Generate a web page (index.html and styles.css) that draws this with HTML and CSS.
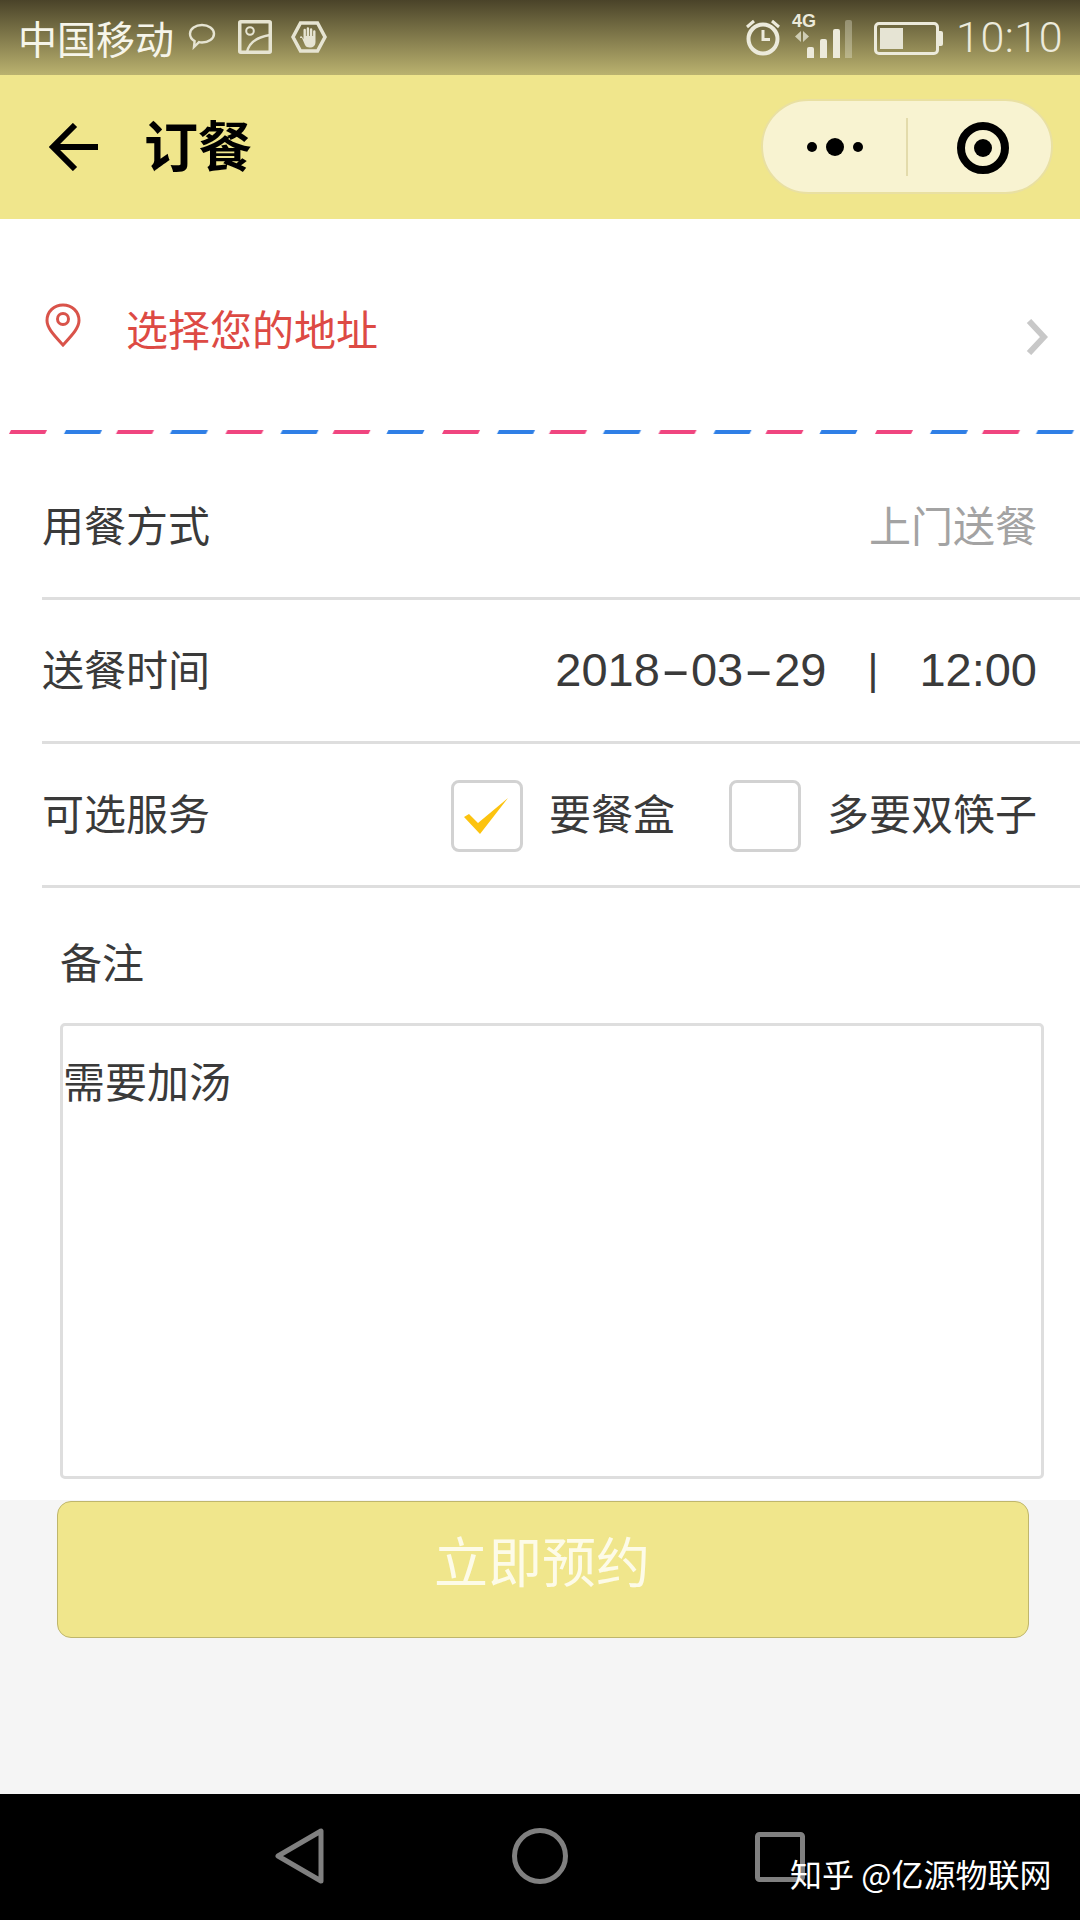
FILE: index.html
```html
<!DOCTYPE html>
<html lang="zh-CN">
<head>
    <meta charset="UTF-8">
    <title>订餐</title>
    <link rel="stylesheet" href="styles.css">
</head>
<body>
    <div class="screen">
        <div class="status-bar">
            <div class="status-left">
                <span class="carrier">中国移动</span>
                <svg class="ic-bubble" width="28" height="28" viewBox="0 0 28 28" fill="none" stroke="#e6e4d2" stroke-width="2.4">
                    <path d="M14 3c6.500 0 12 3.800 12 8.800s-5.500 8.700-12 8.700c-1 0-2 0-3-.3L6 25l.6-5.900C3.800 17.500 2 15 2 11.800 2 6.800 7.500 3 14 3z"/>
                </svg>
                <svg class="ic-photo" width="34" height="34" viewBox="0 0 34 34" fill="none" stroke="#e6e4d2" stroke-width="3.500">
                    <rect x="1.750" y="1.750" width="30.500" height="30.500" rx="1"/>
                    <circle cx="12" cy="11" r="3.800" stroke-width="2"/>
                    <path d="M9 32c2-9 10-15 23-17" stroke-width="2.400"/>
                </svg>
                <svg class="ic-hand" width="36" height="32" viewBox="0 0 36 32">
                    <path d="M9.500 2h17L34 16l-7.500 14h-17L2 16z" fill="none" stroke="#e6e4d2" stroke-width="3.500"/>
                    <path d="M11 17l3 7c1 1.800 2.500 2.500 4.500 2.500 4 0 6-2 6-6V10.500a1.200 1.200 0 0 0-2.400 0V15h-.8V8.500a1.200 1.200 0 0 0-2.400 0V15h-.8V7.500a1.200 1.200 0 0 0-2.400 0V15h-.8V9a1.200 1.200 0 0 0-2.400 0v9l-1.500-2.300c-1-1-2.600-.2-1.800 1.300z" fill="#e6e4d2"/>
                </svg>
            </div>
            <div class="status-right">
                <svg class="ic-alarm" width="36" height="38" viewBox="0 0 36 38" fill="none" stroke="#eceadb">
                    <circle cx="18" cy="21" r="14.500" stroke-width="4"/>
                    <path d="M18 12v9.500h7" stroke-width="3"/>
                    <path d="M2 9l7-6M34 9l-7-6" stroke-width="3"/>
                </svg>
                <div class="signal">
                    <span class="net-label">4G</span>
                    <svg class="net-arrows" width="14" height="12" viewBox="0 0 14 12" fill="#cfcdb4">
                        <path d="M6 0v11L0 5.500zM8 0v11l6-5.500z"/>
                    </svg>
                    <span class="bar bar-1"></span>
                    <span class="bar bar-2"></span>
                    <span class="bar bar-3"></span>
                    <span class="bar bar-4"></span>
                </div>
                <div class="battery"><span class="battery-level"></span></div>
                <span class="clock">10:10</span>
            </div>
        </div>

        <div class="nav-bar">
            <svg class="back-arrow" width="50" height="48" viewBox="0 0 50 48" fill="none" stroke="#000" stroke-width="6">
                <path d="M49 24H5M26 2L4 24l22 22"/>
            </svg>
            <span class="nav-title">订餐</span>
            <div class="capsule">
                <div class="capsule-more">
                    <span class="dot"></span>
                    <span class="dot dot-big"></span>
                    <span class="dot"></span>
                </div>
                <span class="capsule-split"></span>
                <div class="capsule-close">
                    <span class="close-ring"><span class="close-core"></span></span>
                </div>
            </div>
        </div>

        <div class="form-page">
            <div class="address">
                <svg class="pin" width="36" height="44" viewBox="0 0 36 44" fill="none" stroke="#d9534a" stroke-width="3">
                    <path d="M18 42C9 32 2 25 2 17.500 2 8.500 9 2 18 2s16 6.500 16 15.500C34 25 27 32 18 42z"/>
                    <circle cx="18" cy="16" r="5.500"/>
                </svg>
                <span class="address-text">选择您的地址</span>
                <svg class="chevron" width="22" height="36" viewBox="0 0 22 36" fill="none" stroke="#c8c8c8" stroke-width="6">
                    <path d="M3 2l15 16L3 34"/>
                </svg>
            </div>

            <svg class="airmail" width="1080" height="4" viewBox="0 0 1080 4">
                <defs>
                    <pattern id="airmail-dash" width="216.500" height="4" patternUnits="userSpaceOnUse">
                        <path d="M9 4l2-4h36l-2 4z" fill="#f0457f"/>
                        <path d="M64 4l2-4h36l-2 4z" fill="#2f7fe6"/>
                        <path d="M116 4l2-4h36l-2 4z" fill="#f0457f"/>
                        <path d="M170 4l2-4h36l-2 4z" fill="#2f7fe6"/>
                    </pattern>
                </defs>
                <rect width="1080" height="4" fill="url(#airmail-dash)"/>
            </svg>

            <div class="rows">
                <div class="row">
                    <span class="row-label">用餐方式</span>
                    <span class="row-value muted">上门送餐</span>
                </div>
                <div class="row">
                    <span class="row-label">送餐时间</span>
                    <span class="row-value datetime">
                        <span>2018<span class="dash">-</span>03<span class="dash">-</span>29</span>
                        <span class="sep">|</span>
                        <span>12:00</span>
                    </span>
                </div>
                <div class="row">
                    <span class="row-label">可选服务</span>
                    <div class="options">
                        <label class="option">
                            <span class="box">
                                <svg width="46" height="36" viewBox="0 0 46 36">
                                    <path d="M0 19l5-3 9 9L44 0l-28 36z" fill="#fcc30f"/>
                                </svg>
                            </span>
                            <span class="option-text">要餐盒</span>
                        </label>
                        <label class="option">
                            <span class="box"></span>
                            <span class="option-text">多要双筷子</span>
                        </label>
                    </div>
                </div>
            </div>

            <div class="remark">
                <div class="remark-title">备注</div>
                <div class="remark-input">需要加汤</div>
            </div>
        </div>

        <div class="form-footer">
            <button class="submit">立即预约</button>
        </div>

        <div class="system-nav">
            <svg class="sys-back" width="50" height="56" viewBox="0 0 50 56" fill="none" stroke="#808080" stroke-width="5" stroke-linejoin="round">
                <path d="M46 3v50L3 28z"/>
            </svg>
            <svg class="sys-home" width="56" height="56" viewBox="0 0 56 56" fill="none" stroke="#808080" stroke-width="5">
                <circle cx="28" cy="28" r="25.500"/>
            </svg>
            <svg class="sys-recent" width="50" height="50" viewBox="0 0 50 50" fill="none" stroke="#808080" stroke-width="5" stroke-linejoin="round">
                <rect x="2.500" y="2.500" width="45" height="45" rx="2"/>
            </svg>
            <span class="watermark">知乎 @亿源物联网</span>
        </div>
    </div>
</body>
</html>
```

FILE: styles.css
```css
:root {
    --theme-yellow: #f0e68c;
    --line-color: #dedede;
    --text-color: #3a3a3a;
}
* { box-sizing: border-box; }
body {
    margin: 0;
    font-family: "Noto Sans CJK SC", "Noto Sans", sans-serif;
    color: var(--text-color);
    background: #fff;
}
.screen { display: flex; flex-direction: column; width: 1080px; height: 1920px; overflow: hidden; }

/* status bar */
.status-bar {
    display: flex; justify-content: space-between; align-items: center;
    height: 75px; flex-shrink: 0; padding: 0 17px 0 18px;
    background: linear-gradient(#4a4329, #bab26f);
}
.status-left, .status-right { display: flex; align-items: center; }
.carrier { font-size: 39px; line-height: 75px; color: #f6f5ea; }
.ic-bubble { margin-left: 14px; margin-top: -4px; }
.ic-photo { margin-left: 22px; margin-top: -2px; }
.ic-hand { margin-left: 19px; margin-top: -1px; }
.ic-alarm { margin-top: -2px; }
.signal { position: relative; width: 60px; height: 44px; margin-left: 10px; margin-top: -4px; }
.net-label {
    position: absolute; left: 1px; top: -2px;
    font: bold 18px/18px "Liberation Sans", sans-serif; color: #eceadb;
}
.net-arrows { position: absolute; left: 4px; top: 17px; }
.bar { position: absolute; bottom: 0; width: 7px; background: #eceadb; border-radius: 2px 2px 0 0; }
.bar-1 { left: 16px; height: 11px; }
.bar-2 { left: 29px; height: 19px; }
.bar-3 { left: 42px; height: 29px; }
.bar-4 { left: 54px; height: 38px; background: rgba(236, 234, 219, 0.35); }
.battery {
    position: relative; width: 65px; height: 33px; margin-left: 23px; margin-top: 2px; padding: 3px;
    border: 3px solid #eceadb; border-radius: 5px;
}
.battery::after {
    content: ""; position: absolute; right: -7px; top: 6px;
    width: 4px; height: 15px; background: #eceadb; border-radius: 0 2px 2px 0;
}
.battery-level { display: block; width: 23px; height: 100%; background: #e6e4d4; }
.clock {
    margin-left: 17px; font: 300 43px/75px Roboto, sans-serif;
    letter-spacing: 0.5px; color: #eceadb;
}

/* title bar */
.nav-bar {
    display: flex; align-items: center; height: 144px; flex-shrink: 0;
    padding-left: 49px; background: var(--theme-yellow);
}
.back-arrow { margin-top: -1px; }
.nav-title { margin-left: 45px; font-size: 54px; font-weight: 700; color: #000; margin-top: -6px; line-height: 70px; }
.capsule {
    display: flex; align-items: center; width: 292px; height: 95px;
    margin-left: auto; margin-right: 27px; margin-top: -1px;
    background: #f8f3d1; border: 2px solid #e9e0a2; border-radius: 48px;
}
.capsule-more { display: flex; align-items: center; justify-content: center; gap: 9px; width: 143px; margin-top: 1px; }
.dot { width: 10px; height: 10px; border-radius: 50%; background: #000; }
.dot-big { width: 18px; height: 18px; }
.capsule-split { width: 2px; height: 58px; background: #e3dbab; margin-left: 0; }
.capsule-close { display: flex; justify-content: center; flex: 1; padding-left: 6px; margin-top: 2px; }
.close-ring {
    display: flex; align-items: center; justify-content: center;
    width: 52px; height: 52px; border: 8px solid #000; border-radius: 50%;
}
.close-core { width: 18px; height: 18px; border-radius: 50%; background: #000; }

/* form */
.form-page { height: 1281px; flex-shrink: 0; background: #fff; }
.address { display: flex; align-items: center; height: 211px; padding: 0 32px 0 45px; }
.pin { margin-top: 0; }
.address-text { margin-left: 45px; font-size: 42px; color: #dd4a44; margin-top: 6px; }
.chevron { margin-left: auto; margin-top: 24px; }
.airmail { display: block; }

.rows { padding: 22px 0 0 42px; }
.row {
    display: flex; justify-content: space-between; align-items: center;
    height: 144px; padding-right: 43px; font-size: 42px;
    border-bottom: 3px solid var(--line-color);
}
.row-label, .row-value, .option-text { margin-top: -6px; }
.row-value.muted { color: #a3a3a3; }
.row-value.datetime { margin-top: -2px; }
.datetime { display: flex; align-items: center; font-family: "Liberation Sans", sans-serif; font-size: 47px; }
.dash { display: inline-block; width: 31px; text-align: center; transform: scaleX(1.9); }
.sep { margin: 0 41px; font-size: 42px; }
.options { display: flex; align-items: center; gap: 54px; }
.option { display: flex; align-items: center; gap: 26px; }
.box {
    display: flex; align-items: center; justify-content: center;
    width: 72px; height: 72px; margin-top: 3px; background: #fff;
    border: 3px solid #d2d2d2; border-radius: 8px;
}

.remark { padding: 0 36px 0 60px; }
.remark-title { height: 135px; padding-top: 41px; font-size: 42px; line-height: 64px; }
.remark-input {
    height: 456px; padding: 22px 0 0 0;
    font-size: 42px; line-height: 64px;
    border: 3px solid var(--line-color); border-radius: 5px;
}

/* submit area */
.form-footer { flex: 1; padding: 1px 51px 0 57px; background: #f5f5f5; }
.submit {
    display: block; width: 100%; height: 137px; padding: 0 2px 20px 0;
    font-family: inherit; font-size: 54px; color: #fdfbe8;
    background: var(--theme-yellow); border: 1px solid #bfb66c; border-radius: 14px;
}

/* system navigation */
.system-nav { position: relative; display: flex; align-items: center; height: 126px; flex-shrink: 0; padding-left: 275px; background: #000; }
.sys-back { margin-top: -2px; }
.sys-home { margin-left: 187px; margin-top: -2px; }
.sys-recent { margin-left: 187px; margin-top: 0; }
.watermark { position: absolute; left: 790px; top: 59px; font-size: 32px; line-height: 40px; color: #fff; }
```
